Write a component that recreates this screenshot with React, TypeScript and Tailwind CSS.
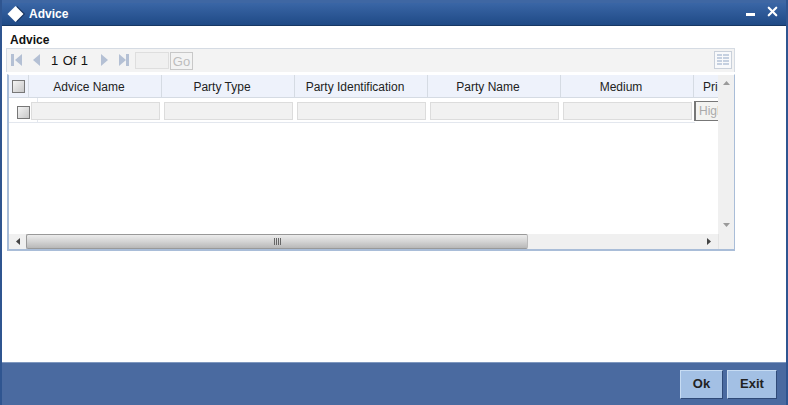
import { X } from 'lucide-react';

const columns = ['Advice Name', 'Party Type', 'Party Identification', 'Party Name', 'Medium'];

const Check = () => (
  <div className="w-[13px] h-[13px] border border-[#777] bg-gradient-to-br from-[#f4f4f4] to-[#c8c8c8]" />
);

const Triangle = ({ d, color = '#b4c0d4' }: { d: string; color?: string }) => (
  <svg width="7" height="12" viewBox="0 0 7 12" className="shrink-0">
    <path d={d} fill={color} />
  </svg>
);

const Pager = () => (
  <div className="flex items-center h-[24px] ml-[4px] w-[729px] bg-[#f3f3f3] border border-[#d5dbe3] border-b-0 pl-[4px] pr-[2px]">
    <div className="w-[3px] h-[12px] bg-[#b4c0d4] mr-[1px] mb-[2px]" />
    <div className="mb-[2px]"><Triangle d="M7 0V12L0 6Z" /></div>
    <div className="ml-[11px] mb-[2px]"><Triangle d="M7 0V12L0 6Z" /></div>
    <div className="ml-[11px] mt-[1px] w-[37px] flex justify-between text-[13px] text-[#111]">
      <span>1</span>
      <span>Of</span>
      <span>1</span>
    </div>
    <div className="ml-[13px] mb-[2px]"><Triangle d="M0 0V12L7 6Z" /></div>
    <div className="ml-[11px] mb-[2px]"><Triangle d="M0 0V12L7 6Z" /></div>
    <div className="w-[3px] h-[12px] bg-[#b4c0d4] mb-[2px]" />
    <div className="ml-[6px] w-[34px] h-[17px] border border-[#dedede] bg-[#f0f0f0]" />
    <div className="ml-[1px] w-[23px] h-[18px] border border-[#c8c8c8] bg-[#f3f3f3] text-[13px] leading-[17px] text-center text-[#bdbdbd]">Go</div>
    <div className="ml-auto w-[18px] h-[18px] mb-[2px] border border-[#c9d0da] bg-[#f8f9fb] flex flex-col justify-center gap-[1px] px-[2px]">
      {[0, 1, 2, 3].map((i) => (
        <div key={i} className="flex gap-[1px]">
          <div className="w-[5px] h-[2px] bg-[#c5d0e0]" />
          <div className="flex-1 h-[2px] bg-[#c5d0e0]" />
        </div>
      ))}
    </div>
  </div>
);

const HeaderRow = () => (
  <div className="flex h-[23px] bg-[#eef2fb] border-b border-[#d5dbe3] shrink-0 min-w-max">
    <div className="w-[20px] flex items-center justify-center border-r border-[#d5dbe3]">
      <Check />
    </div>
    {columns.map((c) => (
      <div key={c} className="w-[133px] flex items-center justify-center border-r border-[#d5dbe3] pr-[12px] pt-[1px] text-[12px] text-[#222]">
        {c}
      </div>
    ))}
    <span className="pl-[9px] pt-[1px] self-center text-[12px] text-[#222]">Priority</span>
  </div>
);

const DataRow = () => (
  <div className="flex h-[25px] items-center border-b border-[#e3e7ee] w-[686px]">
    <div className="w-[29px] h-full pl-[8px] pt-[8px] shrink-0 border-r border-[#e3e7ee]">
      <Check />
    </div>
    <div className="flex items-center gap-[4px] -ml-[7px] mt-[1px]">
      {columns.map((c) => (
        <div key={c} className="w-[129px] h-[18px] border border-[#dcdcdc] bg-[#f1f1f1]" />
      ))}
      <div className="-ml-[2px] mt-[1px] w-[40px] h-[20px] border-l-2 border-t border-b border-[#777] bg-[#f3f3f1] pl-[3px] text-[12px] leading-[18px] text-[#aaa] whitespace-nowrap">
        High
      </div>
    </div>
  </div>
);

const VScroll = () => (
  <div className="w-[16px] bg-[#f0f0f0] flex flex-col items-center justify-between pt-[6px] pb-[7px] shrink-0">
    <svg width="7" height="4" viewBox="0 0 7 4"><path d="M3.5 0L7 4H0Z" fill="#9a9a9a" /></svg>
    <svg width="7" height="4" viewBox="0 0 7 4"><path d="M0 0H7L3.5 4Z" fill="#9a9a9a" /></svg>
  </div>
);

const HScroll = () => (
  <div className="flex items-center h-[15px] bg-[#f0f0f0] shrink-0">
    <div className="w-[17px] flex justify-center">
      <svg width="4" height="7" viewBox="0 0 4 7"><path d="M4 0V7L0 3.5Z" fill="#444" /></svg>
    </div>
    <div className="w-[502px] h-[15px] rounded-[2px] border border-[#999] border-r-[#bbb] bg-gradient-to-b from-[#ececec] via-[#d4d4d4] to-[#b8b8b8] flex items-center justify-center">
      <div className="flex gap-[1px]">
        <div className="w-[1px] h-[7px] bg-[#666]" />
        <div className="w-[1px] h-[7px] bg-[#666]" />
        <div className="w-[1px] h-[7px] bg-[#666]" />
        <div className="w-[1px] h-[7px] bg-[#666]" />
      </div>
    </div>
    <div className="flex-1 flex justify-end pr-[7px]">
      <svg width="4" height="7" viewBox="0 0 4 7"><path d="M0 0V7L4 3.5Z" fill="#444" /></svg>
    </div>
    <div className="w-[16px] h-full border-l border-[#e4e4e4]" />
  </div>
);

export default function App() {
  return (
    <div className="w-[788px] h-[405px] flex flex-col bg-white font-['Liberation_Sans',Arial,sans-serif] overflow-hidden border-x-2 border-[#2f5590] box-border">
      {/* Title bar */}
      <div className="h-[26px] shrink-0 flex items-center bg-gradient-to-b from-[#3a66a6] to-[#1f4a86] border-t-[3px] border-t-[#3f67a3] border-b border-b-[#173763] pl-[5px] pr-[6px]">
        <svg width="18" height="18" viewBox="0 0 18 18" className="shrink-0">
          <path d="M10 1L18 9L10 17Z" fill="#142f58" />
          <path d="M8.5 1L16.5 9L8.5 17L0.5 9Z" fill="#fff" />
        </svg>
        <span className="ml-[4px] text-[12px] font-bold text-white">Advice</span>
        <div className="ml-auto flex items-start -mt-[6px]">
          <div className="w-[9px] h-[3px] bg-white mt-[9px] mr-[10px]" />
          <X size={15} strokeWidth={3.5} color="#fff" />
        </div>
      </div>

      {/* Body */}
      <div className="flex-1 min-h-0">
        <div className="pl-[8px] pt-[7px] h-[22px] text-[12px] leading-[14px] font-bold text-[#111]">Advice</div>
        <Pager />
        <div className="ml-[5px] mt-[2px] w-[728px] h-[177px] flex flex-col border-l-2 border-r border-b-2 border-t border-t-white border-[#a9bdd8]">
          <div className="flex flex-1 min-h-0">
            <div className="flex-1 min-w-0 overflow-hidden">
              <HeaderRow />
              <DataRow />
            </div>
            <VScroll />
          </div>
          <HScroll />
        </div>
      </div>

      {/* Footer */}
      <div className="h-[43px] shrink-0 flex items-center justify-end gap-[4px] bg-[#4a6aa0] border-t border-[#7f98bf] pr-[9px]">
        <button className="w-[43px] h-[29px] bg-[#a3c0e4] border border-t-[#c7dcf3] border-l-[#c7dcf3] border-r-[#2f4a78] border-b-[#2f4a78] text-[13px] font-bold text-[#222]">Ok</button>
        <button className="w-[50px] h-[29px] bg-[#a3c0e4] border border-t-[#c7dcf3] border-l-[#c7dcf3] border-r-[#2f4a78] border-b-[#2f4a78] text-[13px] font-bold text-[#222]">Exit</button>
      </div>
    </div>
  );
}
